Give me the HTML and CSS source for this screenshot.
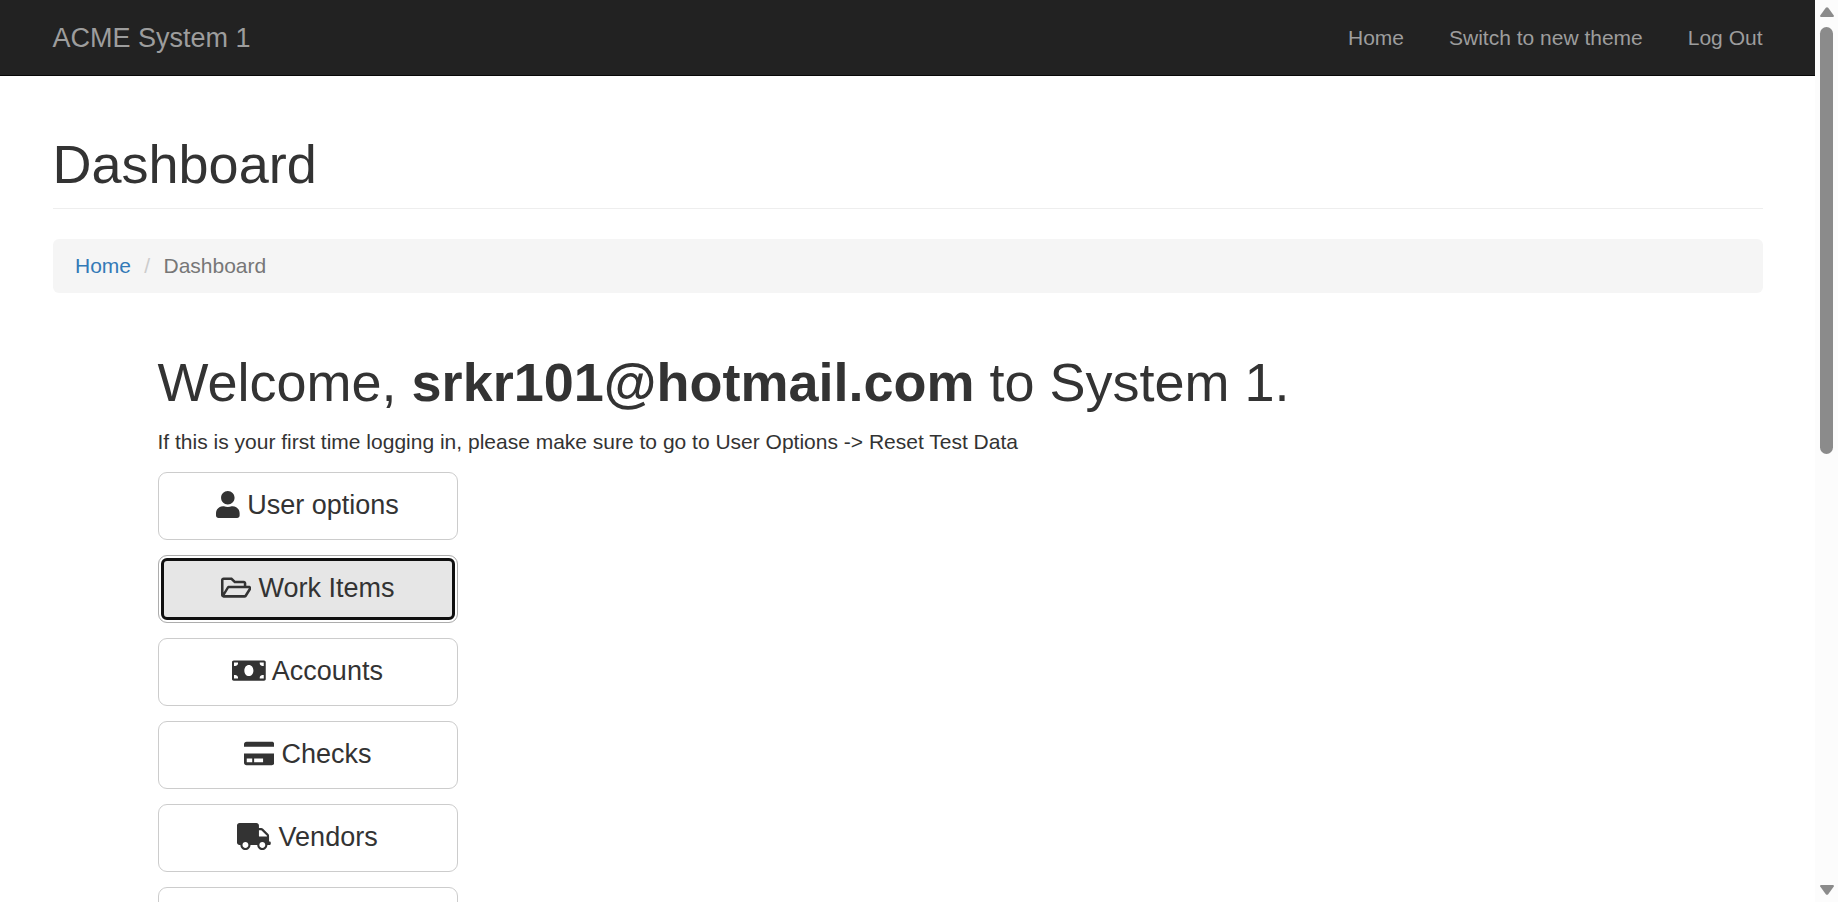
FILE: index.html
```html
<!DOCTYPE html>
<html lang="en">
<head>
<meta charset="utf-8">
<title>ACME System 1 - Dashboard</title>
<link rel="stylesheet" href="styles.css">
</head>
<body>
<div class="window">
  <div class="page">
    <nav class="navbar">
      <a class="brand">ACME System 1</a>
      <div class="nav-links"><a>Home</a><a>Switch to new theme</a><a>Log Out</a></div>
    </nav>
    <main class="content">
      <h1 class="page-header">Dashboard</h1>
      <div class="breadcrumb"><a class="crumb-link">Home</a><span class="slash">/</span><span>Dashboard</span></div>
      <section class="welcome">
        <h1 class="greeting">Welcome, <b>srkr101@hotmail.com</b> to System 1.</h1>
        <p class="hint">If this is your first time logging in, please make sure to go to User Options -&gt; Reset Test Data</p>
        <div class="menu">
          <button class="btn"><svg class="icon" viewBox="0 0 448 512"><path d="M224 256c70.7 0 128-57.3 128-128S294.7 0 224 0 96 57.3 96 128s57.3 128 128 128zm89.6 32h-16.7c-22.2 10.2-46.9 16-72.9 16s-50.6-5.8-72.9-16h-16.7C60.2 288 0 348.2 0 422.4V464c0 26.5 21.5 48 48 48h352c26.5 0 48-21.5 48-48v-41.6c0-74.2-60.2-134.4-134.4-134.4z"/></svg> User options</button>
          <button class="btn focused"><svg class="icon" viewBox="0 0 576 512"><path d="M527.9 224H480v-48c0-26.5-21.5-48-48-48H272l-64-64H48C21.5 64 0 85.5 0 112v288c0 26.5 21.5 48 48 48h400c16.5 0 31.9-8.5 40.7-22.6l79.9-128c20-31.9-3-73.4-40.7-73.4zM48 118c0-3.3 2.7-6 6-6h134.1l64 64H426c3.3 0 6 2.7 6 6v42H152c-16.8 0-32.4 8.8-41.1 23.2L48 351.4zm400 282H72l77.2-128H528z"/></svg> Work Items</button>
          <button class="btn"><svg class="icon" viewBox="0 0 640 512"><path d="M608 64H32C14.33 64 0 78.33 0 96v320c0 17.67 14.33 32 32 32h576c17.67 0 32-14.33 32-32V96c0-17.67-14.33-32-32-32zM38 410v-70h22c26 0 54 18 54 48v22H38zm0-238v-70h76v22c0 30-28 48-54 48H38zm282 190c-50 0-86-46-86-106s36-106 86-106 86 46 86 106-36 106-86 106zm282 48h-76v-22c0-30 28-48 54-48h22v70zm0-238h-22c-26 0-54-18-54-48v-22h76v70z"/></svg> Accounts</button>
          <button class="btn"><svg class="icon" viewBox="0 0 576 512"><path d="M0 432c0 26.5 21.5 48 48 48h480c26.5 0 48-21.5 48-48V256H0v176zm192-80h170v68H192v-68zm-140 0h104v68H52v-68zM576 80v48H0V80c0-26.5 21.5-48 48-48h480c26.5 0 48 21.5 48 48z"/></svg> Checks</button>
          <button class="btn"><svg class="icon" viewBox="0 0 640 512"><path d="M624 352h-16V243.9c0-12.7-5.1-24.9-14.1-33.9L494 110.1c-9-9-21.2-14.1-33.9-14.1H416V48c0-26.5-21.5-48-48-48H48C21.5 0 0 21.5 0 48v320c0 26.5 21.5 48 48 48h16c0 53 43 96 96 96s96-43 96-96h128c0 53 43 96 96 96s96-43 96-96h48c8.8 0 16-7.2 16-16v-32c0-8.8-7.2-16-16-16zM160 472c-31 0-56-25-56-56s25-56 56-56 56 25 56 56-25 56-56 56zm320 0c-31 0-56-25-56-56s25-56 56-56 56 25 56 56-25 56-56 56zm88-216H416V136h44.1L568 243.9V256z"/></svg> Vendors</button>
          <button class="btn"></button>
        </div>
      </section>
    </main>
  </div>
  <div class="scrollbar">
    <svg class="arrow" viewBox="0 0 14 10"><path d="M5.8.8Q7-.5 8.2.8L13.8 8.4Q14.2 10 13 10H1Q-.2 10 .2 8.4Z"/></svg>
    <div class="thumb"></div>
    <svg class="arrow" viewBox="0 0 14 10"><path d="M5.8 9.2Q7 10.5 8.2 9.2L13.8 1.6Q14.2 0 13 0H1Q-.2 0 .2 1.6Z"/></svg>
  </div>
</div>
</body>
</html>
```
FILE: styles.css
```css
* { box-sizing: border-box; }
body {
  margin: 0;
  overflow: hidden;
  font: 21px/30px "Liberation Sans", Arial, sans-serif;
  color: #333;
  background: #fff;
}
.window { display: flex; height: 902px; overflow: hidden; }
.page { flex: 1; min-width: 0; }
.navbar {
  display: flex;
  align-items: center;
  justify-content: space-between;
  height: 76px;
  padding: 0 52.5px;
  background: #222;
  border-bottom: 1px solid #080808;
  color: #9d9d9d;
}
.brand { font-size: 27px; }
.nav-links { display: flex; gap: 45px; }
.content { padding: 59px 52.5px 0; }
.page-header {
  margin: 0 0 30px;
  height: 74px;
  font-size: 54px;
  font-weight: 400;
  line-height: 59px;
  border-bottom: 1px solid #eee;
}
.breadcrumb {
  display: flex;
  height: 54px;
  padding: 12px 22.5px;
  background: #f5f5f5;
  border-radius: 6px;
  color: #777;
}
.crumb-link { color: #337ab7; }
.slash { padding: 0 13.3px; color: #ccc; }
.welcome { padding: 60px 0 0 105px; }
.greeting { margin: 0; font-size: 54px; font-weight: 400; line-height: 59px; }
.hint { margin: 15px 0; }
.menu { display: flex; flex-direction: column; gap: 15px; width: 300px; }
.btn {
  flex: none;
  height: 68px;
  padding: 0 0 2px;
  font: 27px/36px "Liberation Sans", Arial, sans-serif;
  color: #333;
  background: #fff;
  border: 1px solid #ccc;
  border-radius: 9px;
}
.focused {
  background: #e6e6e6;
  border-color: #adadad;
  outline: 3px solid #101010;
  outline-offset: -6px;
  box-shadow: inset 0 0 0 2px #fff;
}
.icon { height: 27px; vertical-align: -4px; fill: currentColor; }
.scrollbar {
  flex: none;
  display: flex;
  flex-direction: column;
  align-items: center;
  width: 23px;
  padding: 7px 0;
  background: #fcfcfc;
}
.arrow { width: 14px; height: 10px; fill: #8b8b8b; }
.thumb { width: 13px; height: 427px; margin: 10px 0 431px; background: #8b8b8b; border-radius: 7px; }
```
